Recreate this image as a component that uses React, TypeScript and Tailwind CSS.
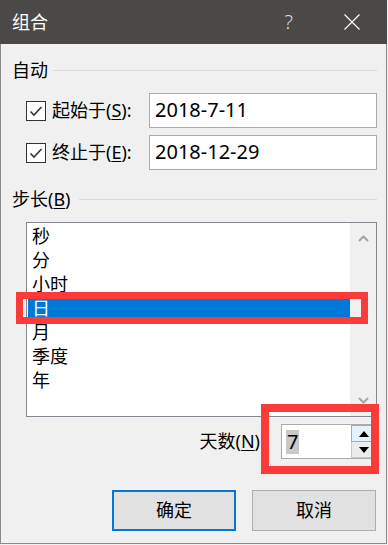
import React from "react";

const items = ["秒", "分", "小时", "日", "月", "季度", "年"];

function Check() {
  return (
    <span className="flex h-[20px] w-[20px] flex-none items-center justify-center border border-[#333333] bg-white">
      <svg width="14" height="12" viewBox="0 0 14 12" fill="none">
        <path d="M1.5 6.5 L5 10 L12.5 2" stroke="#333333" strokeWidth="1.6" />
      </svg>
    </span>
  );
}

function DateRow({ label, hot, value }: { label: string; hot: string; value: string }) {
  return (
    <div className="flex h-[35px] items-center pl-[14px]">
      <Check />
      <span className="ml-[6px] w-[97px] text-[18px]">
        {label}(<span className="underline underline-offset-2">{hot}</span>):
      </span>
      <div className="flex h-[35px] flex-1 items-center border border-[#ababab] bg-white pb-[2px] pl-[5px] text-[20px]">
        {value}
      </div>
    </div>
  );
}

function GroupTitle({ children, line }: { children: React.ReactNode; line: string }) {
  return (
    <div className="flex h-[24px] items-center text-[18px]">
      <span>{children}</span>
      <div className={`h-px flex-1 bg-[#dadada] ${line}`} />
    </div>
  );
}

export default function App() {
  return (
    <div className="relative h-[545px] w-[388px] bg-[#f0f0f0] font-['Noto_Sans','Noto_Sans_CJK_SC',sans-serif] text-black">
      <div className="flex h-[544px] w-[387px] flex-col border border-t-0 border-[#8a8a8a]">
        <div className="-mx-px flex h-[44px] flex-none items-center bg-[#4b4947] pl-[12px] text-white">
          <span className="text-[18px]">组合</span>
          <span className="ml-auto mr-[51px] text-[20px] font-light text-[#d8d8d8]">?</span>
          <svg width="16" height="16" viewBox="0 0 16 16" className="mr-[27px]">
            <path d="M0.5 0.5 L15.5 15.5 M15.5 0.5 L0.5 15.5" stroke="#ffffff" strokeWidth="1.2" />
          </svg>
        </div>

        <div className="flex flex-col pl-[11px] pr-[9px]">
          <div className="mt-[14px]">
            <GroupTitle line="ml-[5px]">自动</GroupTitle>
          </div>
          <div className="mt-[11px]">
            <DateRow label="起始于" hot="S" value="2018-7-11" />
          </div>
          <div className="mt-[7px]">
            <DateRow label="终止于" hot="E" value="2018-12-29" />
          </div>
          <div className="mt-[17px]">
            <GroupTitle line="ml-[8px]">
              步长(<span className="underline underline-offset-2">B</span>)
            </GroupTitle>
          </div>

          <div className="ml-[14px] mt-[11px] flex h-[195px] border border-[#828790] bg-white">
            <div className="flex flex-1 flex-col pt-px pl-px">
              {items.map((it) => (
                <div
                  key={it}
                  className={`flex h-[24px] items-center pl-[4px] text-[18px] ${
                    it === "日" ? "bg-[#0078d7] text-white" : ""
                  }`}
                >
                  {it}
                </div>
              ))}
            </div>
            <div className="flex w-[26px] flex-none flex-col items-center justify-between bg-[#f0f0f0] py-[12px]">
              <svg width="11" height="7" viewBox="0 0 11 7">
                <path d="M1 6 L5.5 1.5 L10 6" stroke="#a6a6a6" strokeWidth="2" fill="none" />
              </svg>
              <svg width="11" height="7" viewBox="0 0 11 7">
                <path d="M1 1 L5.5 5.5 L10 1" stroke="#a6a6a6" strokeWidth="2" fill="none" />
              </svg>
            </div>
          </div>

          <div className="mt-[7px] flex h-[35px] items-center justify-end">
            <span className="mr-[21px] text-[18px]">
              天数(<span className="underline underline-offset-2">N</span>)
            </span>
            <div className="flex h-[35px] w-[96px] border border-[#ababab] bg-white">
              <div className="flex flex-1 items-center pl-[4px]">
                <span className="bg-[#c8c8c8] px-px text-[20px] leading-[24px]">7</span>
              </div>
              <div className="flex w-[25px] flex-col">
                <div className="flex h-[17px] items-center justify-center border border-[#7eb4ea] bg-[#e5f1fb]">
                  <svg width="10" height="6" viewBox="0 0 10 6">
                    <path d="M0 6 L5 0 L10 6 Z" fill="#000" />
                  </svg>
                </div>
                <div className="flex h-[16px] items-center justify-center border border-t-0 border-[#c8c8c8] bg-[#ececec]">
                  <svg width="10" height="6" viewBox="0 0 10 6">
                    <path d="M0 0 L5 6 L10 0 Z" fill="#000" />
                  </svg>
                </div>
              </div>
            </div>
          </div>

          <div className="mr-px mt-[31px] flex justify-end gap-[16px]">
            <button className="h-[41px] w-[124px] border-2 border-[#0078d7] bg-[#e1e1e1] text-[18px]">
              确定
            </button>
            <button className="h-[41px] w-[124px] border border-[#adadad] bg-[#e1e1e1] text-[18px]">
              取消
            </button>
          </div>
        </div>
      </div>

      <div className="absolute left-[16px] top-[292px] h-[32px] w-[352px] border-[7px] border-[#fb3a3a]" />
      <div className="absolute left-[261px] top-[404px] h-[70px] w-[118px] border-[8px] border-[#fb3a3a]" />
    </div>
  );
}
